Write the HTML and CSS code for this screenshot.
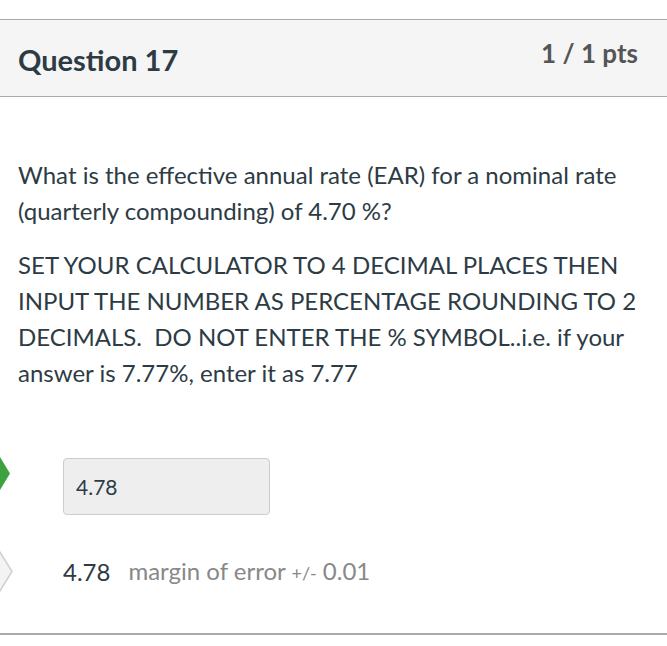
FILE: index.html
```html
<!DOCTYPE html>
<html>
<head>
<meta charset="utf-8">
<link rel="stylesheet" href="styles.css">
</head>
<body>
<div class="page">
  <div class="question">
    <div class="header">
      <h2 class="title">Question 17</h2>
      <div class="pts">1 / 1 pts</div>
    </div>
    <div class="body">
      <p class="text">What is the effective annual rate (EAR) for a nominal rate (quarterly compounding) of 4.70 %?</p>
      <p class="text">SET YOUR CALCULATOR TO 4 DECIMAL PLACES THEN INPUT THE NUMBER AS PERCENTAGE ROUNDING TO 2 DECIMALS.&nbsp; DO NOT ENTER THE % SYMBOL..i.e. if your answer is 7.77%, enter it as 7.77</p>
      <div class="answers">
        <div class="answer">
          <svg class="arrow arrow-green" width="20" height="34" viewBox="0 0 20 34"><polygon points="-20,0 0,0 10,16.5 0,33 -20,33" fill="#3da23d"/></svg>
          <div class="input">4.78</div>
        </div>
        <div class="answer answer-correct">
          <svg class="arrow arrow-gray" width="20" height="42" viewBox="0 0 20 42"><polygon points="-20,1 0,1 12,20.5 0,40 -20,40" fill="#f3f3f3" stroke="#cfcfcf" stroke-width="1.5"/></svg>
          <span class="value">4.78</span>
          <span class="margin">margin of error <span class="pm">+/-</span> 0.01</span>
        </div>
      </div>
    </div>
  </div>
</div>
</body>
</html>
```

FILE: styles.css
```css
html, body {
  margin: 0;
  padding: 0;
  background: #fff;
}
body {
  font-family: Lato, "Open Sans", sans-serif;
  color: #2d3b45;
}
.page {
  padding-top: 19px;
}
.question {
  border-bottom: 2px solid #aaa;
}
.header {
  display: flex;
  justify-content: space-between;
  align-items: flex-start;
  background: #f5f5f5;
  border-top: 1px solid #aaa;
  border-bottom: 1px solid #aaa;
  height: 76px;
  padding: 0 29px 0 18px;
}
.title {
  margin: 23px 0 0 0;
  font-size: 29px;
  font-weight: 700;
  line-height: 34px;
  color: #2d3b45;
}
.pts {
  margin-top: 17px;
  font-size: 26px;
  font-weight: 700;
  line-height: 32px;
  color: #555;
}
.body {
  padding: 60px 18px 0 18px;
}
.text {
  margin: 0 0 18px 0;
  font-size: 24px;
  line-height: 36px;
}
.answers {
  padding: 49px 0 0 45px;
  height: 175px;
}
.answer {
  position: relative;
  display: flex;
  align-items: center;
}
.arrow {
  position: absolute;
  left: -63px;
}
.arrow-green {
  top: -1px;
}
.arrow-gray {
  top: -6px;
}
.input {
  box-sizing: border-box;
  width: 207px;
  height: 57px;
  background: #eee;
  border: 1px solid #ccc;
  border-radius: 4px;
  padding: 0 12px;
  display: flex;
  align-items: center;
  font-size: 21px;
  color: #2d3b45;
}
.answer-correct {
  margin-top: 42px;
  height: 30px;
  font-size: 24px;
  line-height: 30px;
}
.value {
  color: #2d3b45;
  margin-right: 18px;
}
.margin {
  color: #888;
}
.pm {
  font-size: 18px;
}
```
